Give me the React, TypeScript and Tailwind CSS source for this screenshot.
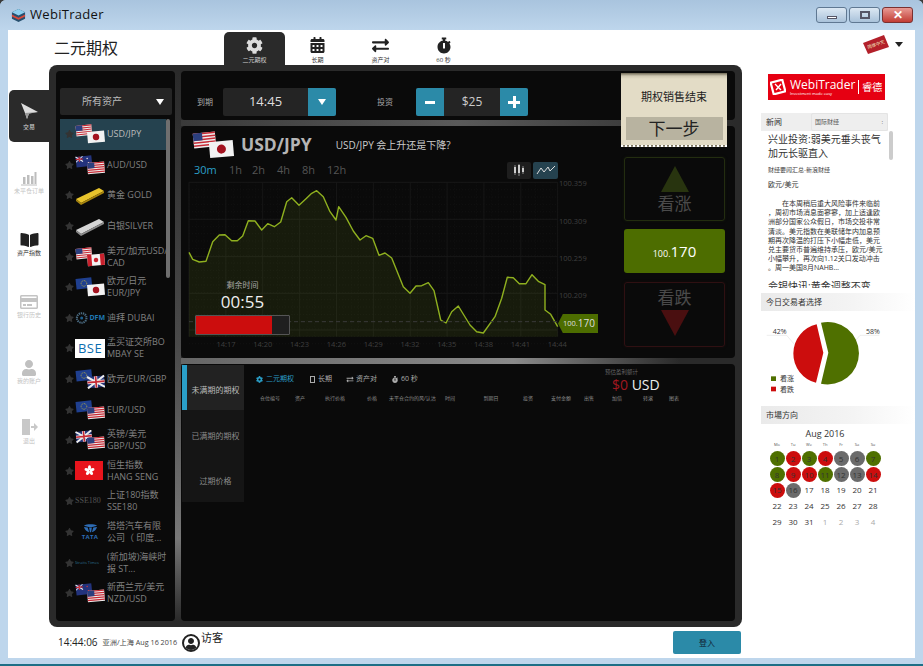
import { FaCalendarAlt, FaCog, FaExchangeAlt, FaStar, FaStopwatch, FaUser, FaBookOpen, FaRegCreditCard } from "react-icons/fa";

type FlagKind = "us" | "jp" | "au" | "ca" | "eu" | "gb" | "nz";

function FlagArt({ kind }: { kind: FlagKind }) {
  if (kind === "us") {
    return (
      <g>
        <rect width="18" height="12" fill="#eee" />
        {[0, 2.4, 4.8, 7.2, 9.6].map((y) => (
          <rect key={y} y={y} width="18" height="1.2" fill="#c62a35" />
        ))}
        <rect width="7.5" height="6" fill="#2b3f7e" />
      </g>
    );
  }
  if (kind === "jp") {
    return (
      <g>
        <rect width="18" height="12" fill="#f2f2f2" />
        <circle cx="9" cy="6" r="3.4" fill="#a3121f" />
      </g>
    );
  }
  if (kind === "ca") {
    return (
      <g>
        <rect width="18" height="12" fill="#f2f2f2" />
        <rect width="4.5" height="12" fill="#c8202c" />
        <rect x="13.5" width="4.5" height="12" fill="#c8202c" />
        <circle cx="9" cy="6" r="2.4" fill="#c8202c" />
      </g>
    );
  }
  if (kind === "eu") {
    return (
      <g>
        <rect width="18" height="12" fill="#1f3f8f" />
        <circle cx="9" cy="6" r="3.2" fill="none" stroke="#d8c52f" strokeWidth="0.9" strokeDasharray="0.9 1" />
      </g>
    );
  }
  if (kind === "gb") {
    return (
      <g>
        <rect width="18" height="12" fill="#26367a" />
        <path d="M0 0L18 12M18 0L0 12" stroke="#eee" strokeWidth="2.2" />
        <path d="M9 0V12M0 6H18" stroke="#eee" strokeWidth="3.4" />
        <path d="M9 0V12M0 6H18" stroke="#c62a35" strokeWidth="1.8" />
      </g>
    );
  }
  return (
    <g>
      <rect width="18" height="12" fill="#23337c" />
      <path d="M0 0L8 6M8 0L0 6" stroke="#eee" strokeWidth="1.1" />
      <path d="M4 0V6M0 3H8" stroke="#c62a35" strokeWidth="1.3" />
      <circle cx="13" cy="3" r="0.8" fill={kind === "nz" ? "#d33" : "#eee"} />
      <circle cx="14" cy="8" r="0.8" fill={kind === "nz" ? "#d33" : "#eee"} />
    </g>
  );
}

function FlagPair({ a, b, className }: { a: FlagKind; b: FlagKind; className: string }) {
  return (
    <svg viewBox="0 0 30 20" className={className}>
      <g transform="translate(0.5 2) rotate(-6) scale(0.88)">
        <FlagArt kind={a} />
      </g>
      <g transform="translate(12 8) rotate(-5) scale(0.95)">
        <FlagArt kind={b} />
      </g>
    </svg>
  );
}

function AssetLogo({ logo }: { logo: string }) {
  if (logo === "gold" || logo === "silver") {
    const top = logo === "gold" ? "#e8c42c" : "#d5d5d5";
    const side = logo === "gold" ? "#a8860f" : "#8c8c8c";
    return (
      <svg viewBox="0 0 30 20" className="h-[20px] w-[30px]">
        <path d="M1 14L24 3L29 6L6 18Z" fill={top} />
        <path d="M1 14L6 18V20L1 16Z" fill={side} />
        <path d="M6 18L29 6V8L6 20Z" fill={side} />
      </svg>
    );
  }
  if (logo === "dfm") {
    return (
      <div className="flex h-[20px] w-[30px] items-center gap-[1px]">
        <svg viewBox="0 0 14 14" className="h-[14px] w-[14px]">
          <circle cx="7" cy="7" r="5" fill="none" stroke="#4a6a80" strokeWidth="2.2" strokeDasharray="1.4 0.8" />
          <circle cx="7" cy="7" r="1.6" fill="#1d5f8f" />
        </svg>
        <span className="text-[7px] font-bold leading-none text-[#1f78b4]">DFM</span>
      </div>
    );
  }
  if (logo === "bse") {
    return (
      <div className="flex h-[19px] w-[30px] items-center justify-center bg-white text-[13px] font-normal leading-none tracking-[0.5px] text-[#0b6db0]">
        BSE
      </div>
    );
  }
  if (logo === "hs") {
    return (
      <div className="flex h-[19px] w-[28px] items-center justify-center bg-[#e8141c]">
        <svg viewBox="0 0 12 12" className="h-[11px] w-[11px]">
          {[0, 72, 144, 216, 288].map((r) => (
            <ellipse key={r} cx="6" cy="3" rx="1.7" ry="2.7" fill="#fff" transform={`rotate(${r} 6 6)`} />
          ))}
        </svg>
      </div>
    );
  }
  if (logo === "sse") {
    return <div className="w-[30px] font-['Liberation_Serif',serif] text-[8px] text-[#555]">SSE180</div>;
  }
  if (logo === "tata") {
    return (
      <div className="flex w-[30px] flex-col items-center">
        <svg viewBox="0 0 16 9" className="h-[9px] w-[15px]">
          <path d="M1 1.5C4 -0.5 12 -0.5 15 1.5L10 3H6Z" fill="#2d6cb5" />
          <path d="M6.5 3.5H9.5L8.6 8.5H7.4Z M1 3C2 6 4 8 6.5 8.5L5 3.5Z M15 3C14 6 12 8 9.5 8.5L11 3.5Z" fill="#2d6cb5" />
        </svg>
        <span className="text-[6px] font-bold leading-[8px] tracking-[0.3px] text-[#2d6cb5]">TATA</span>
      </div>
    );
  }
  if (logo === "st") {
    return <div className="w-[30px] overflow-hidden whitespace-nowrap text-[4px] text-[#2a6f8a]">Straits Times</div>;
  }
  const [a, b] = logo.split("-") as [FlagKind, FlagKind];
  return <FlagPair a={a} b={b} className="h-[20px] w-[30px]" />;
}

const assets = [
  { logo: "us-jp", lines: ["USD/JPY"] },
  { logo: "au-us", lines: ["AUD/USD"] },
  { logo: "gold", lines: ["黄金 GOLD"] },
  { logo: "silver", lines: ["白银SILVER"] },
  { logo: "us-ca", lines: ["美元/加元USD/", "CAD"] },
  { logo: "eu-jp", lines: ["欧元/日元", "EUR/JPY"] },
  { logo: "dfm", lines: ["迪拜 DUBAI"] },
  { logo: "bse", lines: ["孟买证交所BO", "MBAY SE"] },
  { logo: "eu-gb", lines: ["欧元/EUR/GBP"] },
  { logo: "eu-us", lines: ["EUR/USD"] },
  { logo: "gb-us", lines: ["英镑/美元", "GBP/USD"] },
  { logo: "hs", lines: ["恒生指数", "HANG SENG"] },
  { logo: "sse", lines: ["上证180指数", "SSE180"] },
  { logo: "tata", lines: ["塔塔汽车有限", "公司（ 印度..."] },
  { logo: "st", lines: ["(新加坡)海峡时", "报 ST..."] },
  { logo: "nz-us", lines: ["新西兰元/美元", "NZD/USD"] },
];

// traced from the reference at 3x: x, y
const linePts = [
  [27, 397], [38, 418], [58, 426], [78, 424], [98, 365], [118, 345], [135, 344], [155, 362], [172, 362], [188, 348],
  [205, 302], [225, 303], [245, 330], [263, 311], [283, 320], [302, 306], [320, 245], [335, 233], [357, 256], [378, 236],
  [395, 220], [410, 212], [430, 230], [450, 275], [468, 300], [476, 260], [498, 292], [520, 333], [540, 360], [558, 347],
  [578, 355], [597, 406], [615, 399], [635, 414], [670, 500], [690, 520], [708, 498], [725, 497], [745, 488], [762, 512],
  [782, 600], [798, 609], [815, 575], [835, 558], [870, 615], [890, 635], [910, 639], [945, 590], [965, 535], [982, 472],
  [1000, 473], [1018, 491], [1038, 491], [1056, 464], [1075, 484], [1095, 494], [1095, 570], [1112, 583], [1133, 620],
];
const px = (x: number) => x / 3 - 1;
const py = (y: number) => y / 3 - 60;
const linePath = linePts.map(([x, y]) => `${px(x).toFixed(1)},${py(y).toFixed(1)}`).join(" ");
const areaPath = `${px(27)},${py(650)} ${linePath} ${px(1133)},${py(650)}`;
const timeLabels = ["14:17", "14:20", "14:23", "14:26", "14:29", "14:32", "14:35", "14:38", "14:41", "14:44"];
const priceLabels = [
  ["100.359", 190],
  ["100.309", 302],
  ["100.259", 414],
  ["100.209", 525],
];

function Chart() {
  const majorX = Array.from({ length: 11 }, (_, i) => 27 + i * 110.6);
  const minorX = Array.from({ length: 51 }, (_, i) => 27 + i * 22.12);
  const majorY = [187, 298, 410, 520, 630];
  const minorY = Array.from({ length: 23 }, (_, i) => 187 + i * 22);
  return (
    <svg width="425" height="175" viewBox="0 0 425 175" className="block overflow-visible">
      {minorX.map((x) => (
        <line key={x} x1={px(x)} x2={px(x)} y1={py(187)} y2={py(650)} stroke="#151515" strokeWidth="0.6" strokeDasharray="1 2" />
      ))}
      {minorY.map((y) => (
        <line key={y} x1={px(27)} x2={px(1133)} y1={py(y)} y2={py(y)} stroke="#151515" strokeWidth="0.6" strokeDasharray="1 2" />
      ))}
      {majorX.map((x) => (
        <line key={x} x1={px(x)} x2={px(x)} y1={py(187)} y2={py(650)} stroke="#161616" />
      ))}
      {majorY.map((y) => (
        <line key={y} x1={px(27)} x2={px(1133)} y1={py(y)} y2={py(y)} stroke="#181818" />
      ))}
      <polygon points={areaPath} fill="#7d9a1e" fillOpacity="0.12" />
      <polyline points={linePath} fill="none" stroke="#8fb01f" strokeWidth="1.4" strokeLinejoin="round" />
      <line x1={px(27)} x2={px(1140)} y1={py(605)} y2={py(605)} stroke="#3a3a3a" strokeDasharray="4 3" />
      {priceLabels.map(([t, y]) => (
        <text key={t} x={px(1137)} y={py(y as number) + 3} fontSize="7.5" fill="#3f3f3f">
          {t}
        </text>
      ))}
      {timeLabels.map((t, i) => (
        <text key={t} x={px(138 + i * 110.4)} y={py(682)} fontSize="7.5" fill="#3f3f3f" textAnchor="middle">
          {t}
        </text>
      ))}
    </svg>
  );
}

function NavItem({ label, children, className }: { label: string; children: React.ReactNode; className: string }) {
  return (
    <div className={`flex flex-col items-center text-[6px] leading-[8px] ${className}`}>
      {children}
      <span className="mt-[1px] whitespace-nowrap">{label}</span>
    </div>
  );
}

function LeftNav() {
  return (
    <div className="flex w-[41px] shrink-0 flex-col pl-[1px] pt-[25px]">
      <div className="flex h-[52px] flex-col items-center justify-center rounded-l-[5px] bg-[#2a2a2a] text-[6px] leading-[8px] text-[#ddd]">
        <svg viewBox="0 0 20 18" className="h-[18px] w-[20px]">
          <path d="M2 1L19 10L10 11.5L8 17L6 11Z" fill="#ddd" />
          <path d="M6 11L19 10L10 11.5L8 17Z" fill="#999" />
        </svg>
        <span className="mt-[3px]">交易</span>
      </div>
      <NavItem label="未平仓订单" className="mt-[28px] text-[#c4c4c4]">
        <svg viewBox="0 0 16 16" className="h-[16px] w-[16px]">
          <path d="M2 7H4.5V14H2ZM6 5H8.5V14H6ZM10 6H12.5V14H10ZM13.5 2H15.5V14H13.5Z" fill="#bdbdbd" />
          <path d="M0 15H16" stroke="#bdbdbd" />
        </svg>
      </NavItem>
      <NavItem label="资产指数" className="mt-[37px] text-[#333]">
        <FaBookOpen className="h-[16px] w-[19px] text-[#222]" />
      </NavItem>
      <NavItem label="银行历史" className="mt-[37px] text-[#c4c4c4]">
        <FaRegCreditCard className="h-[16px] w-[18px] text-[#c4c4c4]" />
      </NavItem>
      <NavItem label="我的账户" className="mt-[41px] text-[#c4c4c4]">
        <FaUser className="h-[16px] w-[16px] text-[#c0c0c0]" />
      </NavItem>
      <NavItem label="退出" className="mt-[33px] text-[#c4c4c4]">
        <svg viewBox="0 0 18 18" className="h-[18px] w-[18px]">
          <path d="M2 1H10V17H2Z" fill="#c8c8c8" />
          <path d="M11 8H14V5L18 9L14 13V10H11Z" fill="#c8c8c8" />
        </svg>
      </NavItem>
    </div>
  );
}

function AssetColumn() {
  return (
    <div className="relative flex w-[119px] shrink-0 flex-col overflow-hidden rounded-[4px] bg-[#0a0a0a] pl-[4px]">
      <div className="mt-[17px] flex h-[27px] w-[112px] shrink-0 items-center justify-between rounded-[2px] bg-[#252525] pl-[22px] pr-[8px] text-[10px] text-[#bbb]">
        <span>所有资产</span>
        <span className="h-0 w-0 border-x-[4.5px] border-t-[6px] border-x-transparent border-t-white" />
      </div>
      <div className="mt-[4px] flex flex-col">
        {assets.map((a, i) => (
          <div
            key={a.logo + i}
            className={`flex h-[30.6px] w-[106px] shrink-0 items-center text-[9px] leading-[12px] ${i === 0 ? "bg-[#25424f] text-[#bbb]" : "text-[#808080]"}`}
          >
            <FaStar className="ml-[5px] h-[8px] w-[9px] shrink-0 text-[#333]" />
            <div className="ml-[1px] flex w-[32px] shrink-0 items-center">
              <AssetLogo logo={a.logo} />
            </div>
            <div className="whitespace-nowrap">
              {a.lines.map((l) => (
                <div key={l}>{l}</div>
              ))}
            </div>
          </div>
        ))}
      </div>
      <div className="absolute left-[110px] top-[48px] h-[159px] w-[4px] rounded-[2px] bg-[#6f6f6f]" />
    </div>
  );
}

function TopBar() {
  return (
    <div className="flex h-[49px] shrink-0 items-center rounded-[4px] bg-[#0a0a0a] pl-[16px] pt-[13px] text-[#aaa]">
      <span className="w-[26px] text-[8px]">到期</span>
      <div className="flex h-[28px] w-[113px] overflow-hidden rounded-[2px] bg-[#242424]">
        <div className="flex w-[85px] items-center justify-center text-[13px] text-[#ddd]">14:45</div>
        <div className="flex w-[28px] items-center justify-center bg-[#2b8aa8]">
          <span className="h-0 w-0 border-x-[4.5px] border-t-[6px] border-x-transparent border-t-white" />
        </div>
      </div>
      <span className="ml-[41px] w-[39px] text-[8px]">投资</span>
      <div className="flex h-[28px] w-[112px] overflow-hidden rounded-[2px] bg-[#242424]">
        <div className="flex w-[28px] items-center justify-center bg-[#2b8aa8] text-[18px] font-bold text-white">
          <span className="h-[3px] w-[10px] bg-white" />
        </div>
        <div className="flex w-[56px] items-center justify-center text-[12px] text-[#ccc]">$25</div>
        <div className="relative flex w-[28px] items-center justify-center bg-[#2b8aa8]">
          <span className="h-[3px] w-[12px] bg-white" />
          <span className="absolute h-[12px] w-[3px] bg-white" />
        </div>
      </div>
    </div>
  );
}

function ChartPanel() {
  return (
    <div className="relative flex h-[232px] shrink-0 rounded-[4px] bg-[#0a0a0a]">
      <div className="w-[442px] shrink-0">
        <div className="flex h-[34px] items-center pl-[9px] pt-[4px]">
          <FlagPair a="us" b="jp" className="h-[28px] w-[46px]" />
          <span className="ml-[5px] text-[17.5px] font-bold leading-none text-[#b5b5b5]">USD/JPY</span>
          <span className="ml-[24px] text-[10px] text-[#ccc]">USD/JPY 会上升还是下降?</span>
        </div>
        <div className="flex h-[20px] items-center pl-[13px] pr-[65px] text-[11px] text-[#555]">
          <span className="w-[35px] text-[#2a9fc8]">30m</span>
          <span className="w-[23px]">1h</span>
          <span className="w-[25px]">2h</span>
          <span className="w-[25px]">4h</span>
          <span className="w-[25px]">8h</span>
          <span>12h</span>
          <div className="ml-auto flex gap-[2px]">
            <div className="flex h-[17px] w-[24px] items-center justify-center rounded-[2px] bg-[#1e1e1e]">
              <svg viewBox="0 0 14 12" className="h-[12px] w-[14px]">
                <path d="M3 1V11M7 0V12M11 2V10" stroke="#aaa" strokeWidth="0.8" />
                <path d="M2 3H4V9H2ZM6 1H8V9H6ZM10 4H12V8H10Z" fill="#ccc" />
              </svg>
            </div>
            <div className="flex h-[17px] w-[25px] items-center justify-center rounded-[2px] bg-[#25424f]">
              <svg viewBox="0 0 20 10" className="h-[10px] w-[20px]">
                <path d="M1 9L5 3L8 7L12 2L14 6L19 1" fill="none" stroke="#ddd" strokeWidth="1" />
              </svg>
            </div>
          </div>
        </div>
        <Chart />
      </div>
      <div className="ml-[1px] mt-[31px] flex w-[101px] flex-col">
        <div className="flex h-[64px] flex-col items-center rounded-[3px] border border-[#232d10] pt-[8px] shadow-[0_0_3px_#26301055]">
          <span className="h-0 w-0 border-x-[14px] border-b-[26px] border-x-transparent border-b-[#28340f]" />
          <span className="text-[17px] leading-[24px] text-[#4a4a4a]">看涨</span>
        </div>
        <div className="mt-[8px] flex h-[44px] items-center justify-center rounded-[3px] bg-[#4d6d00] text-white">
          <span className="mt-[5px] text-[9px]">100.</span>
          <span className="text-[15px]">170</span>
        </div>
        <div className="mt-[9px] flex h-[65px] flex-col items-center rounded-[3px] border border-[#2f1012] pt-[3px] shadow-[0_0_3px_#30101055]">
          <span className="text-[17px] leading-[24px] text-[#4a4a4a]">看跌</span>
          <span className="h-0 w-0 border-x-[14px] border-t-[26px] border-x-transparent border-t-[#4a0f10]" />
        </div>
      </div>
      <div className="absolute left-[14px] top-[153px] w-[95px] text-center">
        <div className="text-[8px] leading-[12px] text-[#aaa]">剩余时间</div>
        <div className="text-[17px] leading-[22px] text-[#eee]">00:55</div>
        <div className="mt-[2px] h-[20px] rounded-[1px] border border-[#555] bg-[#1f1f1f]">
          <div className="h-full w-[76px] bg-[#cc0d0d]" />
        </div>
      </div>
      <div className="absolute left-[377px] top-[188px] flex h-[19px] w-[40px] items-center justify-end bg-[#4d6d00] pr-[3px] text-[#ddd] [clip-path:polygon(0_50%,12%_0,100%_0,100%_100%,12%_100%)]">
        <span className="text-[7.5px]">100.</span>
        <span className="text-[10px]">170</span>
      </div>
    </div>
  );
}

const tableCols = [
  ["仓位编号", "w-[30px]"],
  ["资产", "w-[30px]"],
  ["执行价格", "w-[40px]"],
  ["价格", "w-[34px]"],
  ["未平仓合约的风/认沽", "w-[44px]"],
  ["时间", "w-[34px]"],
  ["到期日", "w-[48px]"],
  ["投资", "w-[26px]"],
  ["支付金额", "w-[40px]"],
  ["出售", "w-[16px]"],
  ["加倍", "w-[40px]"],
  ["转滚", "w-[22px]"],
  ["图表", "w-[30px]"],
];

function BottomPanel() {
  return (
    <div className="flex min-h-0 flex-1 rounded-[4px] bg-[#0a0a0a] pl-[1px] pt-[1px]">
      <div className="flex h-[137px] w-[62px] shrink-0 flex-col bg-[#151515] text-[8px] text-[#8a8a8a]">
        <div className="flex h-[45px] items-center justify-center border-l-[5px] border-[#2a9fc8] bg-[#222] pt-[5px] text-[#bbb]">未满期的期权</div>
        <div className="flex h-[46px] items-center justify-center pl-[5px] pt-[6px]">已满期的期权</div>
        <div className="flex h-[46px] items-center justify-center pl-[5px] pt-[4px]">过期价格</div>
      </div>
      <div className="relative flex-1 pl-[12px] pt-[8px]">
        <div className="flex items-center text-[7px] leading-[12px] text-[#aaa]">
          <FaCog className="h-[7px] w-[7px] text-[#2a9fc8]" />
          <span className="ml-[3px] text-[#2a9fc8]">二元期权</span>
          <span className="ml-[16px] h-[7px] w-[5px] border border-[#aaa]" />
          <span className="ml-[3px]">长期</span>
          <FaExchangeAlt className="ml-[14px] h-[7px] w-[8px]" />
          <span className="ml-[2px]">资产对</span>
          <FaStopwatch className="ml-[15px] h-[7px] w-[6px]" />
          <span className="ml-[3px]">60 秒</span>
        </div>
        <div className="-ml-[1px] mt-[9px] flex text-center text-[5px] leading-[8px] text-[#8a8a8a]">
          {tableCols.map(([t, w]) => (
            <div key={t} className={`${w} whitespace-nowrap`}>
              {t}
            </div>
          ))}
        </div>
        <div className="absolute left-[361px] top-[3px] text-[5.5px] leading-[8px] text-[#666]">预估盈利额计</div>
        <div className="absolute left-[368px] top-[11px] whitespace-nowrap text-[14px] leading-[18px] text-[#eee]">
          <span className="text-[#a01820]">$0</span> USD
        </div>
      </div>
    </div>
  );
}

function TicketCard() {
  return (
    <div className="absolute left-[440px] top-[2px] flex h-[74px] w-[106px] flex-col items-center border-b-2 border-dotted border-white bg-[#e3dcc6] bg-[linear-gradient(#6d6754_0,#cfc8b2_3px,#e3dcc6_6px)]">
      <div className="flex h-[44px] items-center pt-[4px] text-[11px] text-[#222]">期权销售结束</div>
      <div className="flex h-[23px] w-[97px] items-center justify-center bg-[#b8b3a0] text-[17px] leading-none text-[#222]">下一步</div>
    </div>
  );
}

const sideHeader = "flex h-[18px] items-center bg-[linear-gradient(90deg,#eaeaea,#f4f4f4_60%,#ffffff)] pl-[5px] text-[8px] text-[#333]";

const newsLines = [
  "　　在本周稍后重大风险事件来临前",
  "，周初市场消息面寥寥，加上适逢欧",
  "洲部分国家公众假日，市场交投非常",
  "清淡。美元指数在美联储年内加息预",
  "期再次降温的打压下小幅走低，美元",
  "兑主要货币普遍维持承压，欧元/美元",
  "小幅攀升，再次向1.12关口发动冲击",
  "。周一美国8月NAHB…",
];

const dayColors: Record<number, string> = {
  1: "bg-[#4f7000]", 2: "bg-[#cc0d0d]", 3: "bg-[#4f7000]", 4: "bg-[#cc0d0d]", 5: "bg-[#6b6b6b]", 6: "bg-[#6b6b6b]", 7: "bg-[#4f7000]",
  8: "bg-[#4f7000]", 9: "bg-[#cc0d0d]", 10: "bg-[#cc0d0d]", 11: "bg-[#4f7000]", 12: "bg-[#6b6b6b]", 13: "bg-[#6b6b6b]", 14: "bg-[#cc0d0d]",
  15: "bg-[#cc0d0d]", 16: "bg-[#6b6b6b]",
};

function PieBlock() {
  return (
    <svg width="127" height="95" viewBox="33 65 381 285" className="block" fontSize="21" fill="#333">
      <path d="M50 138H110L150 185M388 138H330L290 185" fill="none" stroke="#ccc" strokeWidth="1" />
      <path d="M213 100A93.7 93.7 0 1 1 213 283L235 190Z" fill="#4f7000" />
      <path d="M200 105A90 90 0 0 0 198 280L220 190Z" fill="#cc0d0d" />
      <text x="68" y="134">42%</text>
      <text x="348" y="134">58%</text>
      <rect x="63" y="261" width="15" height="14" fill="#4f7000" />
      <rect x="63" y="292" width="15" height="14" fill="#cc0d0d" />
      <text x="90" y="276">看涨</text>
      <text x="90" y="307">看跌</text>
    </svg>
  );
}

function Calendar() {
  const days = [...Array.from({ length: 31 }, (_, i) => i + 1), 1, 2, 3, 4];
  return (
    <div className="ml-[8px] w-[112px]">
      <div className="mt-[4px] text-center text-[9px] leading-[12px] text-[#333]">Aug 2016</div>
      <div className="mt-[1px] grid grid-cols-[repeat(7,16px)] text-center text-[4px] leading-[8px] text-[#555]">
        {["Mo", "Tu", "We", "Th", "Fr", "Sa", "Su"].map((d) => (
          <div key={d}>{d}</div>
        ))}
      </div>
      <div className="mt-[2px] grid grid-cols-[repeat(7,16px)] auto-rows-[15.8px] text-center text-[8px]">
        {days.map((d, i) => (
          <div key={i} className="flex items-center justify-center">
            <span className={`flex h-[15px] w-[15px] items-center justify-center rounded-full ${i > 30 ? "text-[#aaa]" : "text-[#333]"} ${i <= 30 && dayColors[d] ? dayColors[d] + " text-[#222]" : ""}`}>
              {d}
            </span>
          </div>
        ))}
      </div>
    </div>
  );
}

function Sidebar() {
  return (
    <div className="w-[173px] shrink-0 overflow-hidden pl-[19px]">
      <div className="ml-[7px] mt-[9px] flex h-[26px] w-[117px] items-center whitespace-nowrap bg-[#e60012] pl-[2px] text-white">
        <svg viewBox="0 0 16 16" className="h-[16px] w-[16px] shrink-0">
          <rect x="2" y="2" width="12" height="12" fill="none" stroke="#fff" strokeWidth="2.2" transform="rotate(-15 8 8)" />
          <path d="M5 5L11 11M11 5L6 11" stroke="#fff" strokeWidth="1.4" />
        </svg>
        <div className="ml-[4px] flex flex-col">
          <span className="text-[12px] leading-[13px]">WebiTrader</span>
          <span className="text-[4px] leading-[5px]">Investment made easy</span>
        </div>
        <span className="ml-[3px] h-[14px] w-px shrink-0 bg-white" />
        <span className="ml-[3px] text-[10px]">睿德</span>
      </div>
      <div className="mt-[13px] flex h-[18px] w-[127px] items-center bg-[#eee] pl-[5px] text-[8px] text-[#333]">
        <span className="w-[45px]">新闻</span>
        <div className="flex h-[18px] flex-1 items-center justify-between rounded-[2px] border border-[#e4e4e4] bg-[#eeeeee] pl-[3px] pr-[4px] text-[6px] text-[#555]">
          <span>国际财经</span>
          <span>:</span>
        </div>
      </div>
      <div className="relative mb-[5px] h-[157px] w-[134px] overflow-hidden pl-[7px]">
        <div className="mt-[1px] text-[10px] leading-[14px] text-[#333]">
          兴业投资:弱美元垂头丧气
          <br />
          加元长驱直入
        </div>
        <div className="mt-[5px] text-[6px] leading-[10px] text-[#444]">财经要闻汇总-新浪财经</div>
        <div className="mt-[5px] text-[7px] leading-[10px] text-[#333]">欧元/美元</div>
        <div className="mt-[9px] whitespace-nowrap text-[7px] leading-[9.2px] text-[#333]">
          {newsLines.map((l) => (
            <div key={l}>{l}</div>
          ))}
        </div>
        <div className="mt-[6px] whitespace-nowrap text-[10px] leading-[14px] text-[#333]">会银快讯:黄金调整不变</div>
        <div className="absolute left-[128px] top-0 h-[29px] w-[4px] rounded-[2px] bg-[#ccc]" />
      </div>
      <div className={sideHeader}>今日交易者选择</div>
      <PieBlock />
      <div className={sideHeader}>市場方向</div>
      <Calendar />
    </div>
  );
}

function CubeIcon() {
  return (
    <svg viewBox="0 0 16 16" className="h-[15px] w-[15px]">
      <path d="M8 1L15 4.5V11.5L8 15L1 11.5V4.5Z" fill="#27506f" />
      <path d="M1 4.5L8 1L15 4.5L8 8Z" fill="#8fd0ef" />
      <path d="M1 7L8 10.5L15 7V9L8 12.5L1 9Z" fill="#d94a3a" />
    </svg>
  );
}

export default function App() {
  return (
    <div className="h-[666px] w-[923px] overflow-hidden bg-[#3a3a3a] font-['Open_Sans','Noto_Sans_CJK_SC',sans-serif]">
      <div className="flex h-full flex-col rounded-t-[6px] border-b-2 border-[#1d6f86] bg-[#b9d3ea] bg-[linear-gradient(#a9c4de,#bed6ec_30px)] px-[8px]">
        <div className="flex h-[30px] shrink-0 items-center">
          <div className="ml-[3px]">
            <CubeIcon />
          </div>
          <span className="ml-[4px] text-[13px] tracking-[0.3px] text-[#111]">WebiTrader</span>
          <div className="ml-auto flex gap-[2px] pr-[2px]">
            <div className="flex h-[16px] w-[31px] items-center justify-center rounded-[3px] border border-[#5f7892] bg-[linear-gradient(#dce8f3,#a9c2da)]">
              <span className="mt-[5px] h-[3px] w-[10px] border border-[#556] bg-white" />
            </div>
            <div className="flex h-[16px] w-[31px] items-center justify-center rounded-[3px] border border-[#5f7892] bg-[linear-gradient(#dce8f3,#a9c2da)]">
              <span className="h-[8px] w-[10px] border-2 border-[#556] bg-transparent" />
            </div>
            <div className="flex h-[16px] w-[31px] items-center justify-center rounded-[3px] border border-[#7a3030] bg-[linear-gradient(#e89a94,#c23c34)] text-[12px] font-bold leading-none text-white">
              ✕
            </div>
          </div>
        </div>
        <div className="flex h-[628px] shrink-0 flex-col bg-white">
          <div className="relative flex h-[35px] shrink-0 items-end">
            <div className="mb-[5px] ml-[46px] w-[170px] text-[16px] leading-[24px] text-[#222]">二元期权</div>
            <div className="flex gap-[2px] text-[6px] leading-[8px] text-[#333]">
              <div className="flex h-[33px] w-[61px] flex-col items-center rounded-t-[5px] bg-[#2a2a2a] pt-[5px] text-[#ccc]">
                <FaCog className="h-[17px] w-[17px] text-[#ddd]" />
                <span className="mt-[2px]">二元期权</span>
              </div>
              <div className="flex h-[33px] w-[61px] flex-col items-center pt-[5px]">
                <FaCalendarAlt className="h-[16px] w-[15px] text-[#222]" />
                <span className="mt-[3px]">长期</span>
              </div>
              <div className="flex h-[33px] w-[61px] flex-col items-center pt-[5px]">
                <FaExchangeAlt className="h-[17px] w-[23px] text-[#222]" />
                <span className="mt-[2px]">资产对</span>
              </div>
              <div className="flex h-[33px] w-[61px] flex-col items-center pt-[5px]">
                <FaStopwatch className="h-[17px] w-[14px] text-[#222]" />
                <span className="mt-[2px]">60 秒</span>
              </div>
            </div>
            <div className="absolute right-[12px] top-[4px] flex items-center gap-[5px]">
              <svg viewBox="0 0 28 20" className="h-[20px] w-[28px]">
                <path d="M1 9L22 1L27 13L6 20Z" fill="#b3202a" />
                <text x="6" y="15" fontSize="4.5" fill="#f2e6c0" transform="rotate(-20 6 15)">简体中文</text>
              </svg>
              <span className="h-0 w-0 border-x-[4px] border-t-[5px] border-x-transparent border-t-[#222]" />
            </div>
          </div>
          <div className="flex min-h-0 flex-1">
            <LeftNav />
            <div className="flex h-[562px] w-[693px] shrink-0 rounded-[8px] bg-[#2a2a2a] px-[7px] py-[6px]">
              <AssetColumn />
              <div className="w-[6px] shrink-0 bg-[linear-gradient(#2a2a2a,#4a4a4a_50%,#777_85%,#2a2a2a)]" />
              <div className="relative flex min-w-0 flex-1 flex-col">
                <TopBar />
                <div className="h-[6px] shrink-0 bg-[linear-gradient(90deg,#3a3a3a,#5a5a5a_50%,#2a2a2a)]" />
                <ChartPanel />
                <div className="h-[6px] shrink-0 bg-[linear-gradient(90deg,#666,#8a8a8a_60%,#2a2a2a_90%)]" />
                <BottomPanel />
                <TicketCard />
              </div>
            </div>
            <Sidebar />
          </div>
          <div className="flex h-[31px] shrink-0 items-center">
            <span className="ml-[50px] text-[10px] text-[#222]">14:44:06</span>
            <span className="ml-[5px] text-[7.2px] text-[#444]">亚洲/上海 Aug 16 2016</span>
            <div className="ml-[5px] flex h-[18px] w-[18px] items-end justify-center overflow-hidden rounded-full border-2 border-[#222] bg-white">
              <FaUser className="h-[12px] w-[12px] text-[#222]" />
            </div>
            <span className="mb-[8px] ml-[1px] text-[11px] text-[#222]">访客</span>
            <div className="ml-[450px] flex h-[23px] w-[68px] items-center justify-center rounded-[2px] bg-[#2b8aa8] text-[8px] text-[#123]">登入</div>
          </div>
        </div>
      </div>
    </div>
  );
}
